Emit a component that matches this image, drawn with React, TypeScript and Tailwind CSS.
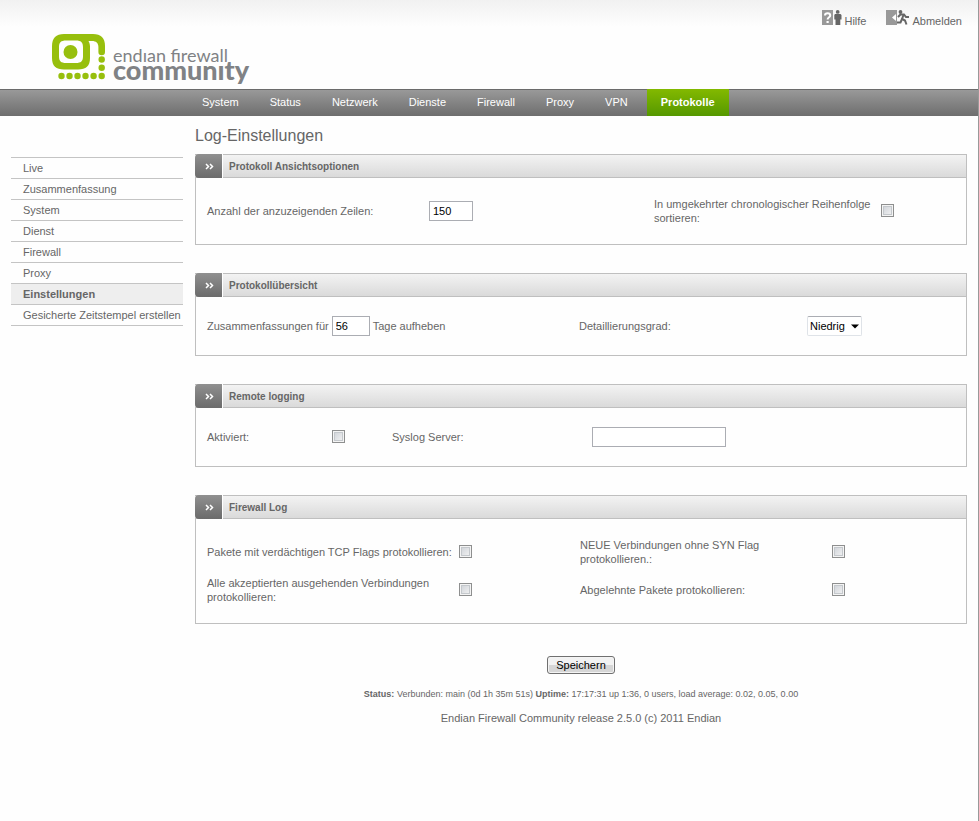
import type { ReactNode } from "react";

const navItems = ["System", "Status", "Netzwerk", "Dienste", "Firewall", "Proxy", "VPN", "Protokolle"];

const sideItems = [
  "Live",
  "Zusammenfassung",
  "System",
  "Dienst",
  "Firewall",
  "Proxy",
  "Einstellungen",
  "Gesicherte Zeitstempel erstellen",
];

function Logo() {
  return (
    <a href="#" aria-label="Endian Firewall Community" className="flex gap-2">
      <svg width="53" height="46" viewBox="0 0 53 46" className="shrink-0">
        <path
          fill="#97bf0d"
          fillRule="evenodd"
          d="M12 0H41C49 0 53 4 53 12V18A3.300 3.300 0 0 1 46.400 18V13C46.400 9 44 7 40 7H36.500C37.700 9 38 11 38 13V24C38 32 34 35.500 26 35.500H12C4 35.500 0 32 0 24V12C0 4 4 0 12 0ZM14 6.500C9 6.500 7 8.500 7 13V22.500C7 27 9 29 14 29H24C29 29 31 27 31 22.500V13C31 8.500 29 6.500 24 6.500Z"
        />
        <circle cx="18.500" cy="18" r="7" fill="#97bf0d" />
        <g fill="#97bf0d">
          <circle cx="49.700" cy="25.500" r="3.200" />
          <circle cx="49.700" cy="33.800" r="3.200" />
          <circle cx="49.700" cy="42" r="3.200" />
          <circle cx="41.600" cy="42" r="3.200" />
          <circle cx="33.500" cy="42" r="3.200" />
          <circle cx="25.500" cy="42" r="3.200" />
          <circle cx="17.500" cy="42" r="3.200" />
          <circle cx="9.500" cy="42" r="3.200" />
        </g>
      </svg>
      <span className="flex flex-col pt-3 font-[Lato,sans-serif] text-[#808285]">
        <span className="text-[18px] leading-[18px]">endıan firewall</span>
        <span className="-mt-2 text-[27px] leading-[27px] font-black">communıty</span>
      </span>
    </a>
  );
}

function HelpIcon() {
  return (
    <svg width="20" height="15" viewBox="0 0 20 15">
      <rect width="11" height="15" fill="#999" />
      <path d="M3 5.500C3 2.500 8.200 2.500 8.200 5.500C8.200 7.500 5.600 7 5.600 9.500" fill="none" stroke="#fff" strokeWidth="2" />
      <rect x="4.500" y="11" width="2.200" height="2" fill="#fff" />
      <circle cx="15.700" cy="1.900" r="1.900" fill="#666" />
      <path d="M13 4H18.500L19.500 5V9.500H18.300V15H13.500V9.500H12.300V5Z" fill="#666" />
    </svg>
  );
}

function LogoutIcon() {
  return (
    <svg width="24" height="15" viewBox="0 0 24 15">
      <rect width="11" height="15" fill="#999" />
      <path d="M10 4V11L6 7.500Z" fill="#fff" />
      <circle cx="14.500" cy="2" r="1.900" fill="#666" />
      <path
        d="M12 7L14.500 4.500L18 4.500L20 7H23M17.500 5L16 9L19 10.500L20.500 14.500M16 9L14.500 12.500H11"
        fill="none"
        stroke="#666"
        strokeWidth="2"
      />
    </svg>
  );
}

function Section({ title, children }: { title: string; children: ReactNode }) {
  return (
    <section>
      <div className="flex h-6 border border-l-0 border-[#bfbfbf] bg-linear-to-b from-[#f3f3f3] to-[#dadada]">
        <span className="-my-px flex w-7 shrink-0 items-center justify-center rounded-l border-r border-r-white bg-linear-to-b from-[#909090] to-[#6b6b6b] pl-0.5">
          <svg width="9" height="7" viewBox="0 0 9 7" fill="none" stroke="#fff" strokeWidth="1.500">
            <path d="M1 1L3.500 3.500L1 6M5 1L7.500 3.500L5 6" />
          </svg>
        </span>
        <h2 className="px-1.5 text-[10px] leading-6 font-bold">{title}</h2>
      </div>
      <div className="border border-t-0 border-[#bfbfbf] px-[11px] py-[19px]">{children}</div>
    </section>
  );
}

function Check({ id }: { id: string }) {
  return (
    <input
      type="checkbox"
      id={id}
      className="mb-px block size-[13px] appearance-none border border-[#8e8f8f] bg-linear-to-br from-[#cbcfd5] to-[#f6f6f6] shadow-[inset_0_0_0_1px_#f4f4f4,inset_0_0_0_2px_#c4c8cc]"
    />
  );
}

const field = "h-5 border border-[#abadb3] bg-white px-[3px] text-[11px] text-black";

export default function App() {
  return (
    <div className="min-h-screen border-r border-[#999] bg-[#fefefe] font-['Liberation_Sans',Arial,sans-serif] text-[11px] leading-[14px] text-[#666]">
      <header className="flex h-[89px] items-start justify-between bg-linear-to-b from-[#f1f1f1] to-[#fefefe] to-30% pr-4 pl-[52px]">
        <div className="pt-[34px]">
          <Logo />
        </div>
        <div className="flex gap-5 pt-[10px]">
          <a href="#" className="flex items-end gap-0.5">
            <HelpIcon />
            <span className="h-[11px]">Hilfe</span>
          </a>
          <a href="#" className="flex items-end gap-0.5">
            <LogoutIcon />
            <span className="h-[11px]">Abmelden</span>
          </a>
        </div>
      </header>

      <nav className="flex h-[27px] gap-[7px] border-t border-[#6b6b6b] bg-linear-to-b from-[#999] to-[#6e6e6e] pl-[190px] text-white">
        {navItems.map((item) => (
          <a
            key={item}
            href="#"
            className={
              item === "Protokolle"
                ? "-mt-px min-w-[82px] bg-linear-to-b from-[#83b900] to-[#559800] px-3 pt-px text-center leading-[25px] font-bold"
                : "px-3 leading-[25px]"
            }
          >
            {item}
          </a>
        ))}
      </nav>

      <div className="flex gap-3 pr-[11px] pl-[11px]">
        <aside className="w-[172px] shrink-0 pt-[41px]">
          <ul className="border-t border-[#c4c4c4]">
            {sideItems.map((item) => (
              <li key={item} className="border-b border-[#c4c4c4]">
                <a
                  href="#"
                  className={
                    item === "Einstellungen"
                      ? "block bg-[#eee] pl-3 leading-5 font-bold whitespace-nowrap"
                      : "block pl-3 leading-5 whitespace-nowrap"
                  }
                >
                  {item}
                </a>
              </li>
            ))}
          </ul>
        </aside>

        <main className="min-w-0 flex-1">
          <h1 className="h-[38px] pt-[10px] text-base leading-5">Log-Einstellungen</h1>

          <form className="flex flex-col gap-7">
            <Section title="Protokoll Ansichtsoptionen">
              <div className="grid grid-cols-[222fr_225fr_227fr_74fr] items-center">
                <label htmlFor="lines">Anzahl der anzuzeigenden Zeilen:</label>
                <input id="lines" defaultValue="150" className={`${field} w-11`} />
                <label htmlFor="reverse">In umgekehrter chronologischer Reihenfolge sortieren:</label>
                <Check id="reverse" />
              </div>
            </Section>

            <Section title="Protokollübersicht">
              <div className="grid grid-cols-[372fr_228fr_148fr] items-center">
                <div className="flex items-center gap-[3px]">
                  <label htmlFor="days">Zusammenfassungen für</label>
                  <input id="days" defaultValue="56" className={`${field} w-[38px]`} />
                  <span>Tage aufheben</span>
                </div>
                <label htmlFor="detail">Detaillierungsgrad:</label>
                <span className="relative w-[55px]">
                  <select
                    id="detail"
                    className="block h-5 w-full appearance-none rounded-xs border border-[#dfe3e8] border-t-[#abadb3] bg-white pl-0.5 text-[11px] text-black"
                  >
                    <option>Niedrig</option>
                    <option>Mittel</option>
                    <option>Hoch</option>
                  </select>
                  <svg width="8" height="5" viewBox="0 0 8 5" className="pointer-events-none absolute top-2 right-[3px]">
                    <path d="M0 0.500H8L4 4.500Z" fill="#000" />
                  </svg>
                </span>
              </div>
            </Section>

            <Section title="Remote logging">
              <div className="grid grid-cols-[125fr_60fr_200fr_363fr] items-center">
                <label htmlFor="remote">Aktiviert:</label>
                <Check id="remote" />
                <label htmlFor="syslog">Syslog Server:</label>
                <input id="syslog" className={`${field} w-[134px]`} />
              </div>
            </Section>

            <Section title="Firewall Log">
              <div className="grid auto-rows-[28px] grid-cols-[252fr_121fr_252fr_123fr] items-center gap-y-[10px]">
                <label htmlFor="tcp">Pakete mit verdächtigen TCP Flags protokollieren:</label>
                <Check id="tcp" />
                <label htmlFor="syn" className="pr-6">
                  NEUE Verbindungen ohne SYN Flag protokollieren.:
                </label>
                <Check id="syn" />
                <label htmlFor="outgoing">Alle akzeptierten ausgehenden Verbindungen protokollieren:</label>
                <Check id="outgoing" />
                <label htmlFor="refused">Abgelehnte Pakete protokollieren:</label>
                <Check id="refused" />
              </div>
            </Section>

            <button
              type="submit"
              className="mt-1 h-[18px] self-center rounded-[3px] border border-[#707070] bg-linear-to-b from-[#f2f2f2] from-50% to-[#d6d6d6] to-50% px-2 leading-4 text-black shadow-[inset_0_0_0_1px_#f4f4f4]"
            >
              Speichern
            </button>
          </form>

          <footer className="text-center">
            <p className="pt-[13px] text-[9px]">
              <b>Status:</b> Verbunden: main (0d 1h 35m 51s) <b>Uptime:</b> 17:17:31 up 1:36, 0 users, load average:
              0.02, 0.05, 0.00
            </p>
            <p className="pt-[10px]">Endian Firewall Community release 2.5.0 (c) 2011 Endian</p>
          </footer>
        </main>
      </div>
    </div>
  );
}
